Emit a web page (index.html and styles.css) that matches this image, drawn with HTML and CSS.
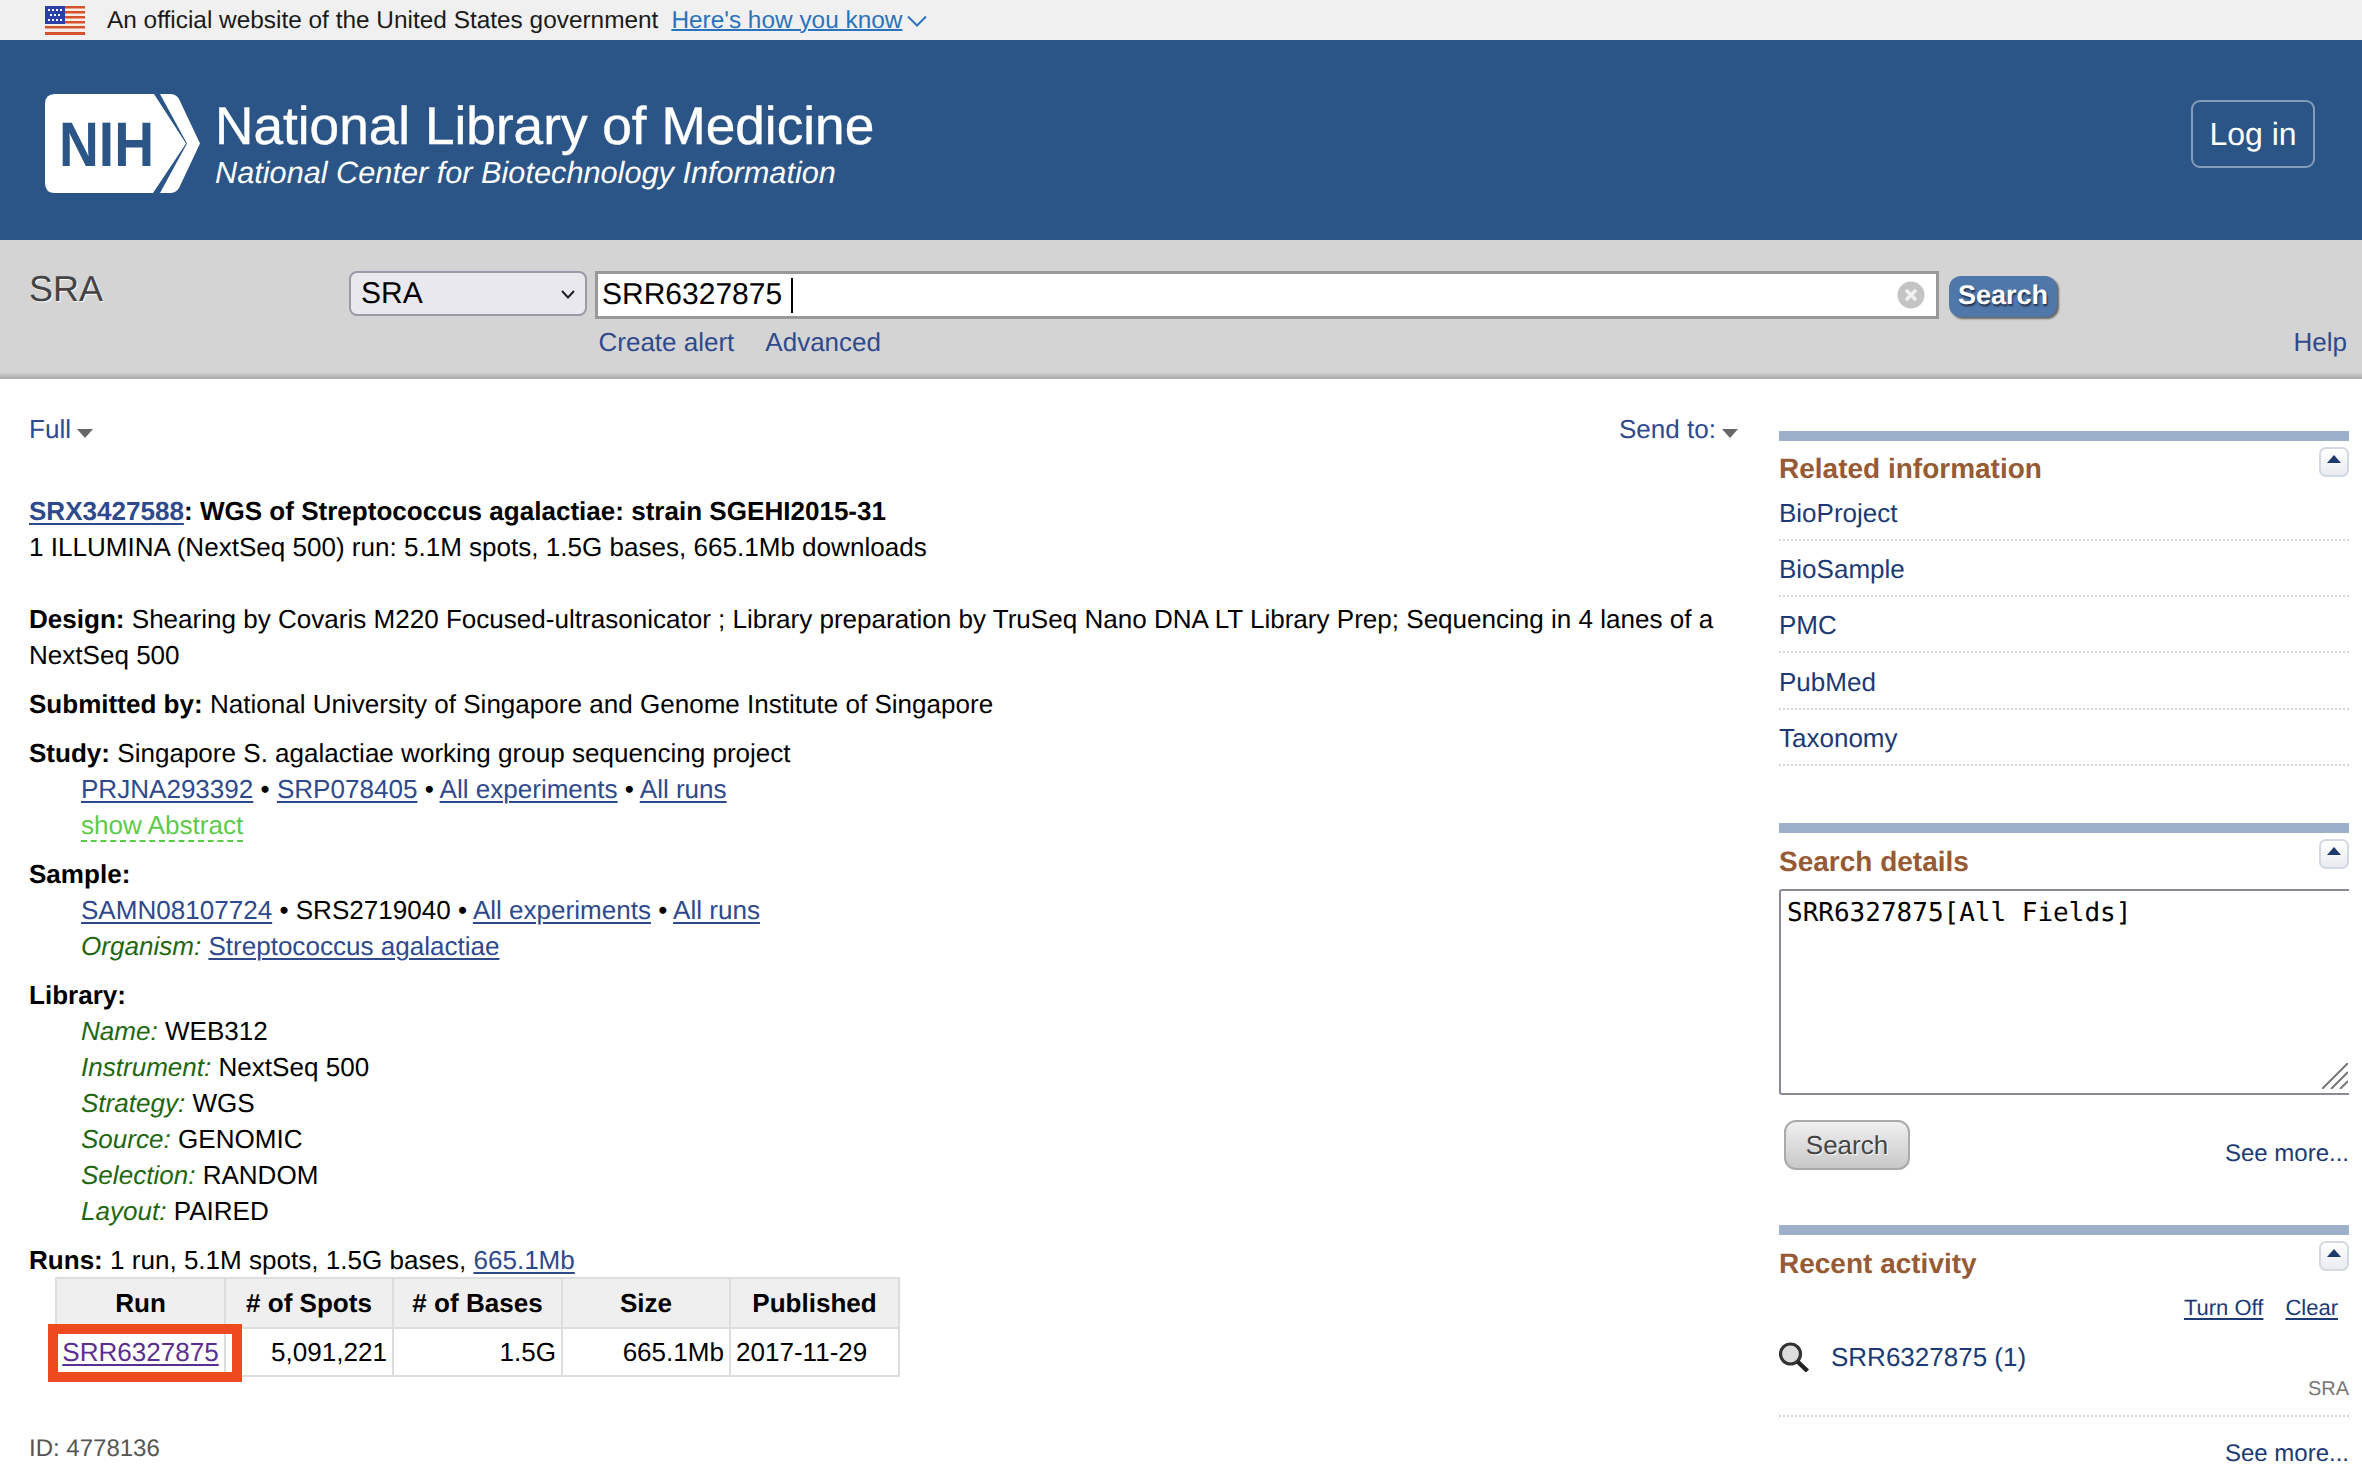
FILE: index.html
```html
<!DOCTYPE html>
<html lang="en">
<head>
<meta charset="utf-8">
<title>SRR6327875 - SRA - NCBI</title>
<link rel="stylesheet" href="styles.css">
</head>
<body>
<div class="gov-banner">
  <svg class="flag" viewBox="0 0 40 29" width="40" height="29" aria-hidden="true">
    <rect width="40" height="29" fill="#fbeee9"/>
    <rect y="0" width="40" height="2.5" fill="#d4532d"/>
    <rect y="5" width="40" height="2.5" fill="#d4532d"/>
    <rect y="10" width="40" height="2.5" fill="#d4532d"/>
    <rect y="15" width="40" height="2.5" fill="#d4532d"/>
    <rect y="20" width="40" height="2.5" fill="#d4532d"/>
    <rect y="26" width="40" height="3" fill="#d4532d"/>
    <rect width="20" height="18" fill="#2a3fa8"/>
    <g fill="#fff">
      <rect x="3" y="3" width="2" height="2"/><rect x="7" y="3" width="2" height="2"/><rect x="11" y="3" width="2" height="2"/><rect x="15" y="3" width="2" height="2"/>
      <rect x="5" y="8" width="2" height="2"/><rect x="9" y="8" width="2" height="2"/><rect x="13" y="8" width="2" height="2"/>
      <rect x="3" y="13" width="2" height="2"/><rect x="7" y="13" width="2" height="2"/><rect x="11" y="13" width="2" height="2"/><rect x="15" y="13" width="2" height="2"/>
    </g>
  </svg>
  <span class="gov-text">An official website of the United States government</span>
  <a class="gov-link" href="#">Here's how you know</a>
  <svg class="gov-chevron" viewBox="0 0 20 12" width="20" height="12" aria-hidden="true"><path d="M1 1.5 L10 10.5 L19 1.5" fill="none" stroke="#2b73bd" stroke-width="2"/></svg>
</div>

<header class="site-header">
  <svg class="nih-logo" viewBox="0 0 155 99" width="155" height="99" role="img" aria-label="NIH">
    <path d="M10 0 H109 L141 49.5 L108 99 H10 Q0 99 0 89 V10 Q0 0 10 0 Z" fill="#fff"/>
    <path d="M115 0 H125 Q131 0 134 5 L155 49.5 L134 94 Q131 99 125 99 H115 L142 49.5 Z" fill="#fff"/>
    <text class="nih-word" x="14" y="72" textLength="95" lengthAdjust="spacingAndGlyphs">NIH</text>
  </svg>
  <div class="brand">
    <div class="brand-title">National Library of Medicine</div>
    <div class="brand-sub">National Center for Biotechnology Information</div>
  </div>
  <a class="login" href="#">Log in</a>
</header>

<section class="searchbar">
  <div class="db-title">SRA</div>
  <div class="search-form">
    <div class="search-row">
      <div class="db-select">
        <span>SRA</span>
        <svg viewBox="0 0 14 9" width="14" height="9" aria-hidden="true"><path d="M1 1 L7 7.5 L13 1" fill="none" stroke="#222" stroke-width="2"/></svg>
      </div>
      <div class="term-input">
        <span class="term-text">SRR6327875</span>
        <span class="caret"></span>
        <svg class="clear-icon" viewBox="0 0 28 28" width="28" height="28" aria-hidden="true">
          <circle cx="14" cy="14" r="13.5" fill="#c4c4c4"/>
          <path d="M9 9 L19 19 M19 9 L9 19" stroke="#f2f2f2" stroke-width="3.4" fill="none"/>
        </svg>
      </div>
      <button class="go-btn" type="button">Search</button>
    </div>
    <div class="search-links">
      <a href="#">Create alert</a>
      <a href="#">Advanced</a>
      <a class="help" href="#">Help</a>
    </div>
  </div>
</section>

<div class="content">
  <main class="main">
    <div class="toolbar">
      <a href="#" class="menu-link">Full<svg class="tri" viewBox="0 0 16 9" width="16" height="9" aria-hidden="true"><path d="M0 0 H16 L8 9 Z" fill="#666"/></svg></a>
      <a href="#" class="menu-link">Send to:<svg class="tri" viewBox="0 0 16 9" width="16" height="9" aria-hidden="true"><path d="M0 0 H16 L8 9 Z" fill="#666"/></svg></a>
    </div>

    <div class="rec-head">
      <div class="rec-title"><a class="ul" href="#">SRX3427588</a>: WGS of Streptococcus agalactiae: strain SGEHI2015-31</div>
      <div>1 ILLUMINA (NextSeq 500) run: 5.1M spots, 1.5G bases, 665.1Mb downloads</div>
    </div>

    <div class="design"><b>Design:</b> Shearing by Covaris M220 Focused-ultrasonicator ; Library preparation by TruSeq Nano DNA LT Library Prep; Sequencing in 4 lanes of a NextSeq 500</div>
    <div class="block"><b>Submitted by:</b> National University of Singapore and Genome Institute of Singapore</div>
    <div class="block">
      <div><b>Study:</b> Singapore S. agalactiae working group sequencing project</div>
      <div class="indent"><a class="ul" href="#">PRJNA293392</a> • <a class="ul" href="#">SRP078405</a> • <a class="ul" href="#">All experiments</a> • <a class="ul" href="#">All runs</a></div>
      <div class="indent"><a class="abstract" href="#">show Abstract</a></div>
    </div>
    <div class="block">
      <div><b>Sample:</b></div>
      <div class="indent"><a class="ul" href="#">SAMN08107724</a> • SRS2719040 • <a class="ul" href="#">All experiments</a> • <a class="ul" href="#">All runs</a></div>
      <div class="indent"><i class="attr">Organism:</i> <a class="ul" href="#">Streptococcus agalactiae</a></div>
    </div>
    <div class="block">
      <div><b>Library:</b></div>
      <div class="indent"><i class="attr">Name:</i> WEB312</div>
      <div class="indent"><i class="attr">Instrument:</i> NextSeq 500</div>
      <div class="indent"><i class="attr">Strategy:</i> WGS</div>
      <div class="indent"><i class="attr">Source:</i> GENOMIC</div>
      <div class="indent"><i class="attr">Selection:</i> RANDOM</div>
      <div class="indent"><i class="attr">Layout:</i> PAIRED</div>
    </div>
    <div class="block">
      <div><b>Runs:</b> 1 run, 5.1M spots, 1.5G bases, <a class="ul" href="#">665.1Mb</a></div>
      <table class="runs">
        <thead>
          <tr><th class="c1">Run</th><th class="c2"># of Spots</th><th class="c3"># of Bases</th><th class="c4">Size</th><th class="c5">Published</th></tr>
        </thead>
        <tbody>
          <tr>
            <td class="run-cell"><a class="ul visited" href="#">SRR6327875</a><span class="highlight"></span></td>
            <td class="num">5,091,221</td>
            <td class="num">1.5G</td>
            <td class="num">665.1Mb</td>
            <td>2017-11-29</td>
          </tr>
        </tbody>
      </table>
    </div>
    <div class="rec-id">ID: 4778136</div>
  </main>

  <aside class="sidebar">
    <section class="portlet">
      <h3>Related information</h3>
      <button class="toggle" type="button" aria-label="Collapse"><svg viewBox="0 0 14 8" width="14" height="8" aria-hidden="true"><path d="M7 0 L14 8 H0 Z" fill="#1d3a6e"/></svg></button>
      <ul class="rel-list">
        <li><a href="#">BioProject</a></li>
        <li><a href="#">BioSample</a></li>
        <li><a href="#">PMC</a></li>
        <li><a href="#">PubMed</a></li>
        <li><a href="#">Taxonomy</a></li>
      </ul>
    </section>

    <section class="portlet details">
      <h3>Search details</h3>
      <button class="toggle" type="button" aria-label="Collapse"><svg viewBox="0 0 14 8" width="14" height="8" aria-hidden="true"><path d="M7 0 L14 8 H0 Z" fill="#1d3a6e"/></svg></button>
      <div class="query-box">SRR6327875[All Fields]
        <svg class="grip" viewBox="0 0 26 26" width="26" height="26" aria-hidden="true">
          <path d="M0 26 L26 0 M9 26 L26 9 M18 26 L26 18" stroke="#777" stroke-width="2" fill="none"/>
        </svg>
      </div>
      <div class="details-foot">
        <button class="gray-btn" type="button">Search</button>
        <a class="see-more" href="#">See more...</a>
      </div>
    </section>

    <section class="portlet recent">
      <h3>Recent activity</h3>
      <button class="toggle" type="button" aria-label="Collapse"><svg viewBox="0 0 14 8" width="14" height="8" aria-hidden="true"><path d="M7 0 L14 8 H0 Z" fill="#1d3a6e"/></svg></button>
      <div class="recent-actions"><a href="#">Turn Off</a><a href="#">Clear</a></div>
      <div class="recent-item">
        <svg viewBox="0 0 30 30" width="30" height="30" aria-hidden="true">
          <circle cx="11.5" cy="12" r="10" fill="#ddd" stroke="#333" stroke-width="3.2"/>
          <path d="M19 20 L28.5 29" stroke="#222" stroke-width="4.4" fill="none"/>
        </svg>
        <a href="#">SRR6327875 (1)</a>
      </div>
      <div class="recent-db">SRA</div>
      <div class="recent-foot"><a class="see-more" href="#">See more...</a></div>
    </section>
  </aside>
</div>
</body>
</html>
```

FILE: styles.css
```css
* { box-sizing: border-box; }
html, body { margin: 0; padding: 0; }
body {
  font-family: "Liberation Sans", Arial, sans-serif;
  font-size: 26px;
  line-height: 36px;
  color: #000;
  background: #fff;
  overflow: hidden;
  text-rendering: geometricPrecision;
}
button { text-rendering: inherit; }
a { color: #2f4a8c; text-decoration: none; }
b { font-weight: 700; }

.gov-banner {
  height: 40px;
  background: #f0f0f0;
  display: flex;
  align-items: center;
  padding-left: 45px;
  font-size: 24.4px;
  color: #1b1b1b;
}
.flag { flex: none; margin-right: 22px; }
.gov-text { margin-right: 13px; padding-top: 2px; }
.gov-link { color: #2b73bd; text-decoration: underline; text-decoration-thickness: 2px; padding-top: 2px; margin-right: -1px; }
.gov-chevron { margin: 2px 0 0 6px; }

.site-header {
  height: 200px;
  background: #2c5587;
  display: flex;
  align-items: flex-start;
  padding: 54px 47px 0 45px;
  color: #fff;
}
.nih-logo { flex: none; }
.nih-word { font-family: "Liberation Sans", Arial, sans-serif; font-size: 63px; font-weight: 700; fill: #2c5587; }
.brand { margin-left: 15px; }
.brand-title { font-size: 53.2px; line-height: 58px; margin-top: 4px; -webkit-text-stroke: .4px #fff; }
.brand-sub { font-size: 30.7px; font-style: italic; line-height: 36px; margin-top: -1px; }
.login {
  margin-left: auto;
  margin-top: 6px;
  width: 124px;
  height: 68px;
  border: 2px solid rgba(255, 255, 255, .42);
  border-radius: 9px;
  color: #fff;
  font-size: 32px;
  line-height: 64px;
  text-align: center;
}

.searchbar {
  height: 139px;
  display: flex;
  padding: 31px 15px 0 29px;
  background: linear-gradient(#d4d4d4 calc(100% - 7px), #a9a9a9 100%);
}
.db-title {
  width: 320px;
  flex: none;
  font-size: 36px;
  line-height: 36px;
  color: #444;
  text-shadow: 1px 1px 1px #fff;
}
.search-form { flex: 1; }
.search-row { display: flex; align-items: flex-start; }
.db-select {
  width: 238px;
  height: 45px;
  border: 2px solid #9a9aa8;
  border-radius: 8px;
  background: #e8e8ee;
  display: flex;
  align-items: center;
  justify-content: space-between;
  padding: 1px 10px 0 10px;
  font-size: 30px;
}
.term-input {
  position: relative;
  width: 1344px;
  height: 48px;
  margin-left: 8px;
  border: 3px solid #999;
  background: #fff;
  display: flex;
  align-items: center;
  padding-left: 4px;
  font-size: 30px;
}
.caret { width: 2px; height: 35px; background: #000; margin-left: 9px; }
.clear-icon { position: absolute; right: 11px; top: 7px; }
.go-btn {
  width: 108px;
  height: 41px;
  margin: 5px 0 0 10px;
  padding: 0 0 2px;
  border: 0;
  border-radius: 12px;
  background: #4f77a9;
  box-shadow: 2px 2px 2px #666;
  color: #fff;
  font: 700 27px/37px "Liberation Sans", Arial, sans-serif;
  text-shadow: 1px 2px 2px #1d2f4a;
}
.search-links {
  display: flex;
  margin: 5px 0 0 249.5px;
  gap: 31px;
}
.help { margin-left: auto; }

.content {
  display: flex;
  gap: 41px;
  padding: 0 13px 0 29px;
}
.main { width: 1709px; flex: none; padding-top: 32px; font-size: 26.05px; }
.sidebar { width: 570px; flex: none; padding-top: 52px; }

.toolbar { display: flex; justify-content: space-between; }
.tri { margin-left: 6px; vertical-align: 0; }
.rec-head { margin-top: 46px; }
.rec-title { font-weight: 700; }
.design { margin-top: 36px; }
.block { margin-top: 13px; }
.ul { text-decoration: underline; text-decoration-thickness: 2px; text-underline-offset: 3px; }
.indent { padding-left: 52px; }
.attr { color: #1f6710; }
.abstract { color: #5dcb4a; border-bottom: 2px dashed #5dcb4a; }
.visited { color: #5b2f91; }

.runs {
  border-collapse: collapse;
  margin: -1px 0 0 26px;
  table-layout: fixed;
  width: 843px;
}
.runs th, .runs td { border: 2px solid #ddd; padding: 0 5px; }
.runs th { height: 50px; background: #efefef; text-align: center; font-weight: 700; }
.runs td { height: 48px; }
.c1 { width: 169px; }
.c2 { width: 168px; }
.c3 { width: 169px; }
.c4 { width: 168px; }
.c5 { width: 169px; }
.num { text-align: right; }
.run-cell { position: relative; text-align: center; }
.highlight {
  position: absolute;
  left: -9px;
  top: -5px;
  width: 194px;
  height: 58px;
  border: 10px solid #ee4a1f;
}
.rec-id { margin-top: 54px; font-size: 24px; color: #555; }

.portlet { position: relative; border-top: 10px solid #9cb0c9; }
.portlet h3 {
  margin: 11px 0 0;
  font-size: 28px;
  line-height: 34px;
  font-weight: 700;
  color: #965a35;
}
.details h3, .recent h3 { margin-top: 12px; }
.toggle {
  position: absolute;
  right: 0;
  top: 6px;
  width: 30px;
  height: 30px;
  padding: 0;
  border: 2px solid #d3d9e2;
  border-radius: 7px;
  background: linear-gradient(#fff, #e8ebf0);
  display: flex;
  align-items: center;
  justify-content: center;
}
.toggle svg { margin-bottom: 6px; }
.portlet a { color: #1c3a74; }
.rel-list { list-style: none; margin: -1.5px 0 0; padding: 0; }
.rel-list li {
  padding: 10.25px 0 8px;
  border-bottom: 2px dotted #d5d5d5;
}
.details { margin-top: 57px; }
.query-box {
  position: relative;
  height: 206px;
  margin-top: 10px;
  border: 2px solid #8a8a9a;
  border-right: 0;
  border-radius: 3px 0 0 3px;
  padding: 7px 6px;
  font-family: "DejaVu Sans Mono", monospace;
  font-size: 26px;
  line-height: 30px;
}
.grip { position: absolute; right: 1px; bottom: 4px; }
.details-foot {
  display: flex;
  justify-content: space-between;
  align-items: flex-end;
  margin-top: 25px;
  padding-left: 5px;
}
.gray-btn {
  width: 126px;
  height: 50px;
  padding: 0;
  border: 2px solid #aaa;
  border-radius: 12px;
  background: linear-gradient(#f0f0f0, #c8c8c8);
  color: #444;
  font: 26px/44px "Liberation Sans", Arial, sans-serif;
  text-shadow: 1px 1px 1px #fff;
  margin-bottom: 1px;
}
.see-more { font-size: 24px; position: relative; top: 1px; }
.recent { margin-top: 54px; }
.recent-actions {
  display: flex;
  justify-content: flex-end;
  gap: 22px;
  margin-top: 9px;
  padding-right: 11px;
  font-size: 22px;
}
.recent-actions a { text-decoration: underline; text-decoration-thickness: 2px; text-underline-offset: 3px; }
.recent-item {
  display: flex;
  align-items: center;
  gap: 22px;
  margin-top: 13px;
}
.recent-db {
  text-align: right;
  font-size: 20px;
  line-height: 28px;
  color: #777;
  padding-bottom: 12px;
  border-bottom: 2px dotted #d5d5d5;
}
.recent-foot { text-align: right; margin-top: 16px; }
```
